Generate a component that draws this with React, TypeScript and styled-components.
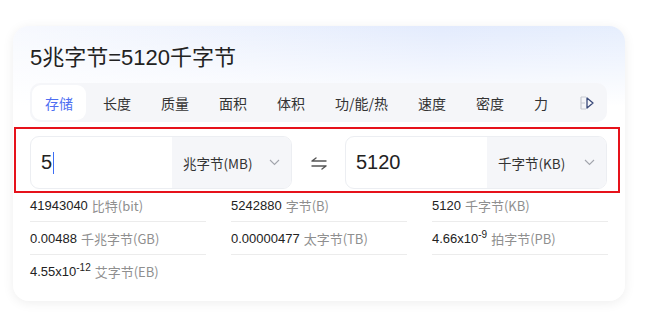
import React from "react";
import styled, { createGlobalStyle } from "styled-components";

const Global = createGlobalStyle`
  html, body { margin: 0; padding: 0; background: #fff; }
  body { font-family: "Liberation Sans", "Noto Sans CJK SC", Arial, sans-serif; color: #222; }
  * { box-sizing: border-box; }
`;

const Page = styled.div`
  padding: 26px 22px 19px 13px;
`;

const Card = styled.div`
  width: 612px;
  height: 275px;
  border-radius: 16px;
  padding: 17px 17px 12px 17px;
  background: linear-gradient(180deg, rgba(255,255,255,0) 0%, #fff 80px),
    linear-gradient(90deg, #f7f9fe 0%, #e3ebfd 70%, #e6eefd 100%);
  box-shadow: 0 2px 12px rgba(0, 0, 0, 0.07);
`;

const Title = styled.h1`
  margin: 0;
  font-size: 22px;
  line-height: 30px;
  font-weight: 400;
  color: #222;
  font-family: "Liberation Sans", "Noto Sans CJK SC", sans-serif;
`;

const TabBar = styled.div`
  margin-top: 10px;
  width: 577px;
  height: 39px;
  background: #f5f6f9;
  border-radius: 10px;
  padding: 2px;
  display: flex;
  align-items: center;
  gap: 4px;
  position: relative;
  overflow: hidden;
`;

const Tab = styled.div<{ $active?: boolean }>`
  height: 35px;
  padding: 0 13px;
  display: flex;
  align-items: center;
  justify-content: center;
  border-radius: 9px;
  font-size: 14px;
  font-family: "Noto Sans CJK SC", sans-serif;
  white-space: nowrap;
  color: ${(p) => (p.$active ? "#4e6ef2" : "#333")};
  background: ${(p) => (p.$active ? "#fff" : "transparent")};
  flex-shrink: 0;
`;

const MoreIcon = styled.div`
  flex-shrink: 0;
  width: 30px;
  height: 35px;
  display: flex;
  align-items: center;
  justify-content: center;
  margin-left: 8px;
`;

const Converter = styled.div`
  position: relative;
  margin-top: 14px;
  display: flex;
  align-items: center;
  height: 53px;
  width: 577px;
  &::after {
    content: "";
    position: absolute;
    left: -16px;
    right: -13px;
    top: -9px;
    bottom: -4px;
    border: 2px solid #e6121b;
    pointer-events: none;
  }
`;

const Field = styled.div`
  flex: 0 0 262px;
  height: 53px;
  display: flex;
  border: 1px solid #eceef2;
  border-radius: 9px;
  overflow: hidden;
  background: #fff;
`;

const Value = styled.div`
  flex: 1;
  display: flex;
  align-items: center;
  padding-left: 10px;
  font-size: 20px;
  color: #222;
  font-family: "Liberation Sans", sans-serif;
`;

const Caret = styled.span`
  display: inline-block;
  width: 1px;
  height: 22px;
  background: #3d6ef5;
  margin-left: 1px;
`;

const Select = styled.div`
  flex: 0 0 119px;
  background: #f5f6f9;
  display: flex;
  align-items: center;
  justify-content: space-between;
  padding: 0 11px 0 11px;
  font-size: 13.5px;
  color: #333;
  font-family: "Noto Sans CJK SC", sans-serif;
`;

const Swap = styled.div`
  flex: 0 0 53px;
  display: flex;
  align-items: center;
  justify-content: center;
`;

const Results = styled.div`
  display: grid;
  grid-template-columns: repeat(3, 176px);
  column-gap: 25px;
`;

const Cell = styled.div<{ $last?: boolean }>`
  height: 33px;
  display: flex;
  align-items: center;
  font-size: 13px;
  border-bottom: ${(p) => (p.$last ? "none" : "1px solid #ececec")};
  white-space: nowrap;
`;

const Num = styled.span`
  color: #222;
  font-family: "Liberation Sans", sans-serif;
`;

const Sup = styled.sup`
  font-size: 10px;
  vertical-align: 5px;
  line-height: 0;
`;

const Unit = styled.span`
  color: #8f8f8f;
  margin-left: 4px;
  font-family: "Noto Sans CJK SC", sans-serif;
  font-size: 13px;
`;

const Chevron = () => (
  <svg width="11" height="7" viewBox="0 0 11 7">
    <path d="M1 1l4.5 4.5L10 1" fill="none" stroke="#a3a6ad" strokeWidth="1.1" />
  </svg>
);

type Res = { n: string; sup?: string; u: string; last?: boolean } | null;

const results: Res[] = [
  { n: "41943040", u: "比特(bit)" },
  { n: "5242880", u: "字节(B)" },
  { n: "5120", u: "千字节(KB)" },
  { n: "0.00488", u: "千兆字节(GB)" },
  { n: "0.00000477", u: "太字节(TB)" },
  { n: "4.66x10", sup: "-9", u: "拍字节(PB)" },
  { n: "4.55x10", sup: "-12", u: "艾字节(EB)", last: true },
  null,
  null,
];

const tabs = ["存储", "长度", "质量", "面积", "体积", "功/能/热", "速度", "密度", "力"];

export default function App() {
  return (
    <>
      <Global />
      <Page>
        <Card>
          <Title>5兆字节=5120千字节</Title>
          <TabBar>
            {tabs.map((t, i) => (
              <Tab key={t} $active={i === 0}>
                {t}
              </Tab>
            ))}
            <MoreIcon>
              <svg width="18" height="16" viewBox="0 0 18 16">
                <path d="M2 2h5M2 8h4M2 14h5M2 2v12" fill="none" stroke="#c7cad1" strokeWidth="1.2" />
                <path d="M8 3l6 5-6 5z" fill="none" stroke="#3a4a7a" strokeWidth="1.3" strokeLinejoin="round" />
              </svg>
            </MoreIcon>
          </TabBar>
          <Converter>
            <Field>
              <Value>
                5<Caret />
              </Value>
              <Select>
                <span>兆字节(MB)</span>
                <Chevron />
              </Select>
            </Field>
            <Swap>
              <svg width="18" height="14" viewBox="0 0 18 14">
                <path d="M2 5h14M2 5l4-3" fill="none" stroke="#555" strokeWidth="1.4" strokeLinecap="round" />
                <path d="M2 10h14M16 10l-4 3" fill="none" stroke="#555" strokeWidth="1.4" strokeLinecap="round" />
              </svg>
            </Swap>
            <Field>
              <Value>5120</Value>
              <Select>
                <span>千字节(KB)</span>
                <Chevron />
              </Select>
            </Field>
          </Converter>
          <Results>
            {results.map((r, i) =>
              r ? (
                <Cell key={i} $last={r.last}>
                  <Num>
                    {r.n}
                    {r.sup && <Sup>{r.sup}</Sup>}
                  </Num>
                  <Unit>{r.u}</Unit>
                </Cell>
              ) : (
                <Cell key={i} $last />
              )
            )}
          </Results>
        </Card>
      </Page>
    </>
  );
}
